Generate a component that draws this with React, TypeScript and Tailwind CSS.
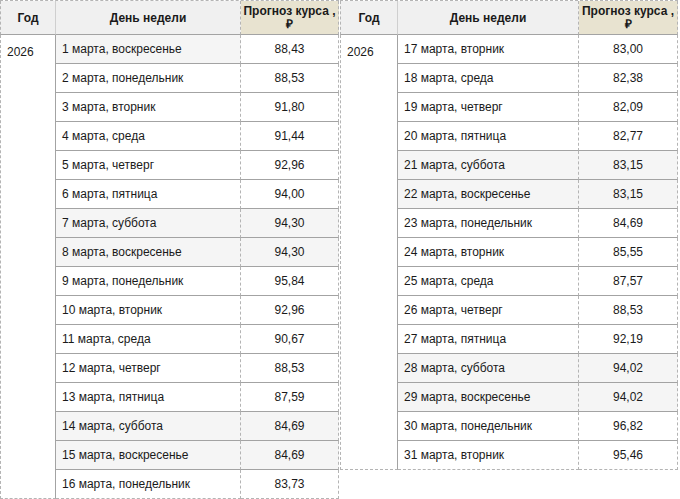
type Row = { day: string; rate: string; weekend?: boolean };

const left: Row[] = [
  { day: "1 марта, воскресенье", rate: "88,43", weekend: true },
  { day: "2 марта, понедельник", rate: "88,53" },
  { day: "3 марта, вторник", rate: "91,80" },
  { day: "4 марта, среда", rate: "91,44" },
  { day: "5 марта, четверг", rate: "92,96" },
  { day: "6 марта, пятница", rate: "94,00" },
  { day: "7 марта, суббота", rate: "94,30", weekend: true },
  { day: "8 марта, воскресенье", rate: "94,30", weekend: true },
  { day: "9 марта, понедельник", rate: "95,84" },
  { day: "10 марта, вторник", rate: "92,96" },
  { day: "11 марта, среда", rate: "90,67" },
  { day: "12 марта, четверг", rate: "88,53" },
  { day: "13 марта, пятница", rate: "87,59" },
  { day: "14 марта, суббота", rate: "84,69", weekend: true },
  { day: "15 марта, воскресенье", rate: "84,69", weekend: true },
  { day: "16 марта, понедельник", rate: "83,73" },
];

const right: Row[] = [
  { day: "17 марта, вторник", rate: "83,00" },
  { day: "18 марта, среда", rate: "82,38" },
  { day: "19 марта, четверг", rate: "82,09" },
  { day: "20 марта, пятница", rate: "82,77" },
  { day: "21 марта, суббота", rate: "83,15", weekend: true },
  { day: "22 марта, воскресенье", rate: "83,15", weekend: true },
  { day: "23 марта, понедельник", rate: "84,69" },
  { day: "24 марта, вторник", rate: "85,55" },
  { day: "25 марта, среда", rate: "87,57" },
  { day: "26 марта, четверг", rate: "88,53" },
  { day: "27 марта, пятница", rate: "92,19" },
  { day: "28 марта, суббота", rate: "94,02", weekend: true },
  { day: "29 марта, воскресенье", rate: "94,02", weekend: true },
  { day: "30 марта, понедельник", rate: "96,82" },
  { day: "31 марта, вторник", rate: "95,46" },
];

interface ForecastTableProps {
  rows: Row[];
  widths: [string, string, string];
  className?: string;
}

function ForecastTable({ rows, widths, className = "" }: ForecastTableProps) {
  return (
    <table className={`border-separate border-spacing-0 table-fixed self-start [border-top:1px_dashed_#b4b4b4] ${className}`}>
      <colgroup>
        <col className={widths[0]} />
        <col className={widths[1]} />
        <col className={widths[2]} />
      </colgroup>
      <thead>
        <tr className="h-[34px]">
          <th className="bg-[#f0f0f0] font-bold text-center align-middle [border-left:1px_dashed_#b4b4b4] [border-right:1px_solid_#cfcfcf] [border-bottom:1px_solid_#a3a3a3]">
            Год
          </th>
          <th className="bg-[#f0f0f0] font-bold text-center align-middle [border-right:1px_dashed_#b4b4b4] [border-bottom:1px_solid_#a3a3a3]">
            День недели
          </th>
          <th className="bg-[#e8e3d0] font-bold text-center align-middle leading-[13px] px-0 whitespace-nowrap [border-right:1px_dashed_#b4b4b4] [border-bottom:1px_solid_#a3a3a3]">
            Прогноз курса ,<br />₽
          </th>
        </tr>
      </thead>
      <tbody>
        {rows.map((r, i) => {
          const last = i === rows.length - 1;
          const bottom = last ? "[border-bottom:1px_dashed_#b4b4b4]" : "[border-bottom:1px_solid_#a3a3a3]";
          const shade = r.weekend ? "bg-[#f5f5f5]" : "bg-white";
          const rateShade = r.weekend && i > 0 ? "bg-[#f5f5f5]" : "bg-white";
          return (
            <tr key={r.day} className="h-[29px]">
              {i === 0 && (
                <td
                  rowSpan={rows.length}
                  className="align-top pt-[8px] pl-[6px] bg-white [border-left:1px_dashed_#b4b4b4] [border-right:1px_solid_#a3a3a3] [border-bottom:1px_dashed_#b4b4b4]"
                >
                  2026
                </td>
              )}
              <td className={`pl-[6px] align-middle whitespace-nowrap ${shade} ${bottom} [border-right:1px_dashed_#b4b4b4]`}>
                {r.day}
              </td>
              <td className={`text-center align-middle ${rateShade} ${bottom} [border-right:1px_dashed_#b4b4b4]`}>
                {r.rate}
              </td>
            </tr>
          );
        })}
      </tbody>
    </table>
  );
}

export default function App() {
  return (
    <div className="w-[680px] h-[499px] overflow-hidden bg-white text-[#1a1a1a] text-[12px] font-['Liberation_Sans',Arial,sans-serif]">
      <div className="flex items-start">
        <ForecastTable rows={left} widths={["w-[56px]", "w-[185px]", "w-[98px]"]} className="w-[339px]" />
        <ForecastTable rows={right} widths={["w-[58px]", "w-[181px]", "w-[99px]"]} className="w-[338px] ml-[1px]" />
      </div>
    </div>
  );
}
